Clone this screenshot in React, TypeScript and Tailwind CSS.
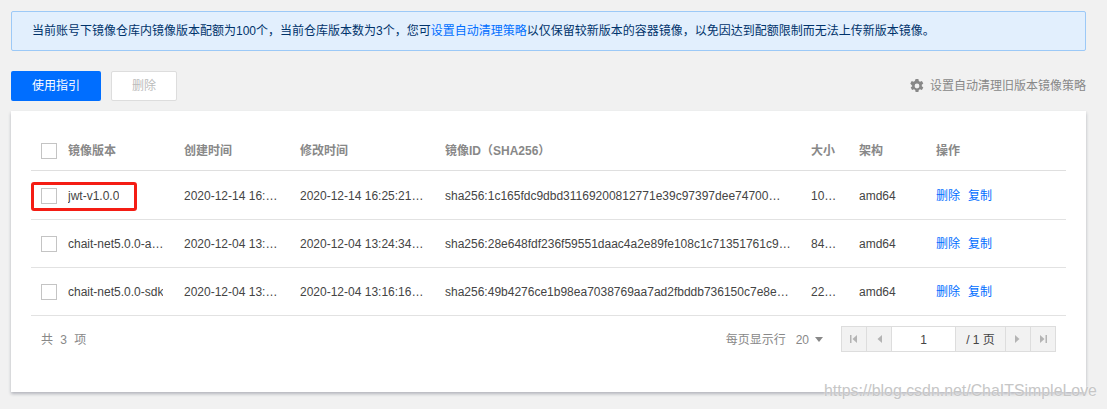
import React from 'react';

const rows = [
  { name: 'jwt-v1.0.0', created: '2020-12-14 16:25:21 +0800', updated: '2020-12-14 16:25:21 +0800', id: 'sha256:1c165fdc9dbd31169200812771e39c97397dee74700…', size: '106.32 MB', marked: true },
  { name: 'chait-net5.0.0-aspnet', created: '2020-12-04 13:24:34 +0800', updated: '2020-12-04 13:24:34 +0800', id: 'sha256:28e648fdf236f59551daac4a2e89fe108c1c71351761c9e0d7a6b5c4f3e2d1c0', size: '84.21 MB', marked: false },
  { name: 'chait-net5.0.0-sdk', created: '2020-12-04 13:16:16 +0800', updated: '2020-12-04 13:16:16 +0800', id: 'sha256:49b4276ce1b98ea7038769aa7ad2fbddb736150c7e8e2f1a0b9c8d7e6f5a4b3c', size: '228.6 MB', marked: false },
];

const Checkbox = () => <span className="block w-4 h-4 border border-[#c4c4c4] bg-white" />;

const Gear = () => (
  <svg width="16" height="16" viewBox="0 0 16 16" className="text-[#888888]">
    <path
      fill="currentColor"
      fillRule="evenodd"
      d="M6.6 1h2.8l.4 2 1.2.7 1.9-.7 1.4 2.5-1.5 1.3v1.4l1.5 1.3-1.4 2.5-1.9-.7-1.2.7-.4 2H6.6l-.4-2-1.2-.7-1.9.7-1.4-2.5 1.5-1.3V7.800L1.300 5.500l1.400-2.500 1.900.7 1.200-.7zM8 5.600a2.400 2.400 0 1 0 0 4.800 2.400 2.400 0 0 0 0-4.800z"
    />
  </svg>
);

const PagerButton = ({ dir, bar }: { dir: 'left' | 'right'; bar?: boolean }) => (
  <span className="w-[25px] last:w-[24px] h-full flex items-center justify-center bg-[#f2f2f2] border-r border-[#dddddd] last:border-r-0">
    <svg width="10" height="10" viewBox="0 0 10 10" className="text-[#b4b4b4]">
      {dir === 'left' ? (
        <>
          {bar && <rect x="1" y="1" width="1.500" height="8" fill="currentColor" />}
          <path d="M8 1v8L3.500 5z" fill="currentColor" />
        </>
      ) : (
        <>
          <path d="M2 1v8l4.500-4z" fill="currentColor" />
          {bar && <rect x="7.500" y="1" width="1.500" height="8" fill="currentColor" />}
        </>
      )}
    </svg>
  </span>
);

export default function App() {
  return (
    <div
      className="relative w-[1107px] h-[409px] overflow-hidden bg-[#f1f1f1] pl-[11px] pr-[21px] pt-[11px] text-[12px] text-[#444444]"
      style={{ fontFamily: '"Liberation Sans", "Noto Sans CJK SC", sans-serif' }}
    >
      {/* Notice */}
      <div className="h-[40px] flex items-center px-[20px] bg-[#e2effd] border border-[#9cc9f7] rounded-[2px] text-[#00336b]">
        <span>
          当前账号下镜像仓库内镜像版本配额为100个，当前仓库版本数为3个，您可
          <span className="text-[#006eff]">设置自动清理策略</span>
          以仅保留较新版本的容器镜像，以免因达到配额限制而无法上传新版本镜像。
        </span>
      </div>

      {/* Toolbar */}
      <div className="mt-[20px] h-[30px] flex items-center">
        <button className="w-[90px] h-[30px] bg-[#006eff] text-white rounded-[2px]">使用指引</button>
        <button className="ml-[10px] w-[66px] h-[30px] bg-white text-[#bbbbbb] border border-[#dddddd] rounded-[2px]">删除</button>
        <div className="ml-auto flex items-center gap-[5px] text-[#888888]">
          <Gear />
          <span>设置自动清理旧版本镜像策略</span>
        </div>
      </div>

      {/* Table card */}
      <div className="mt-[10px] h-[281px] bg-white shadow-[0_2px_3px_0_rgba(54,58,80,0.32)] px-[20px] pt-[19px]">
        <table className="w-[1035px] table-fixed border-collapse">
          <colgroup>
            <col className="w-[143px]" />
            <col className="w-[116px]" />
            <col className="w-[145px]" />
            <col className="w-[366px]" />
            <col className="w-[48px]" />
            <col className="w-[77px]" />
            <col className="w-[140px]" />
          </colgroup>
          <thead>
            <tr className="h-[40px] border-b border-[#dfdfdf] text-left text-[#888888]">
              <th className="pl-[10px] pt-[2px] font-bold">
                <div className="flex items-center gap-[11px]">
                  <Checkbox />
                  <span>镜像版本</span>
                </div>
              </th>
              <th className="px-[10px] pt-[2px] font-bold">创建时间</th>
              <th className="px-[10px] pt-[2px] font-bold">修改时间</th>
              <th className="px-[10px] pt-[2px] font-bold">镜像ID（SHA256）</th>
              <th className="px-[10px] pt-[2px] font-bold">大小</th>
              <th className="px-[10px] pt-[2px] font-bold">架构</th>
              <th className="px-[10px] pt-[2px] font-bold">操作</th>
            </tr>
          </thead>
          <tbody>
            {rows.map((row) => (
              <tr key={row.name} className="h-[48px] first:h-[49px] border-b border-[#e2e2e2] [&>td]:pt-[1px] first:[&>td]:pt-[2px]">
                <td className="pl-[10px] pr-[10px] relative">
                  <div className="flex items-center gap-[11px]">
                    <span className="shrink-0"><Checkbox /></span>
                    <span className="truncate">{row.name}</span>
                  </div>
                  {row.marked && (
                    <span className="absolute left-0 top-[11px] w-[106px] h-[29px] border-[3px] border-[#f41d14] rounded-[3px]" />
                  )}
                </td>
                <td className="px-[10px] truncate">{row.created}</td>
                <td className="px-[10px] truncate">{row.updated}</td>
                <td className="px-[10px] truncate">{row.id}</td>
                <td className="px-[10px] truncate">{row.size}</td>
                <td className="px-[10px] truncate">amd64</td>
                <td className="px-[10px]">
                  <span className="text-[#006eff]">删除</span>
                  <span className="ml-[8px] text-[#006eff]">复制</span>
                </td>
              </tr>
            ))}
          </tbody>
        </table>

        {/* Footer */}
        <div className="mt-[10px] h-[26px] w-[1025px] pl-[10px] flex items-center text-[#888888]">
          <span className="pt-[2px] [word-spacing:4px]">共 3 项</span>
          <span className="ml-auto pt-[2px]">每页显示行</span>
          <span className="ml-[10px] pt-[2px]">20</span>
          <svg width="8" height="5" viewBox="0 0 8 5" className="ml-[6px] mt-[2px] text-[#888888]">
            <path d="M0 0h8L4 5z" fill="currentColor" />
          </svg>
          <div className="ml-[18px] w-[215px] h-[26px] flex items-stretch border border-[#dddddd]">
            <PagerButton dir="left" bar />
            <PagerButton dir="left" />
            <span className="w-[64px] pt-[2px] flex items-center justify-center bg-white text-[#444444] border-r border-[#dddddd]">1</span>
            <span className="w-[50px] pt-[2px] flex items-center justify-center bg-[#f2f2f2] text-[#444444] border-r border-[#dddddd]">/ 1 页</span>
            <PagerButton dir="right" />
            <PagerButton dir="right" bar />
          </div>
        </div>
      </div>

      {/* Watermark */}
      <span className="absolute left-[824px] top-[379px] text-[15.9px] text-[#c6c6c6] [text-shadow:0_0_2px_rgba(255,255,255,0.9)]">
        https://blog.csdn.net/ChaITSimpleLove
      </span>
    </div>
  );
}
